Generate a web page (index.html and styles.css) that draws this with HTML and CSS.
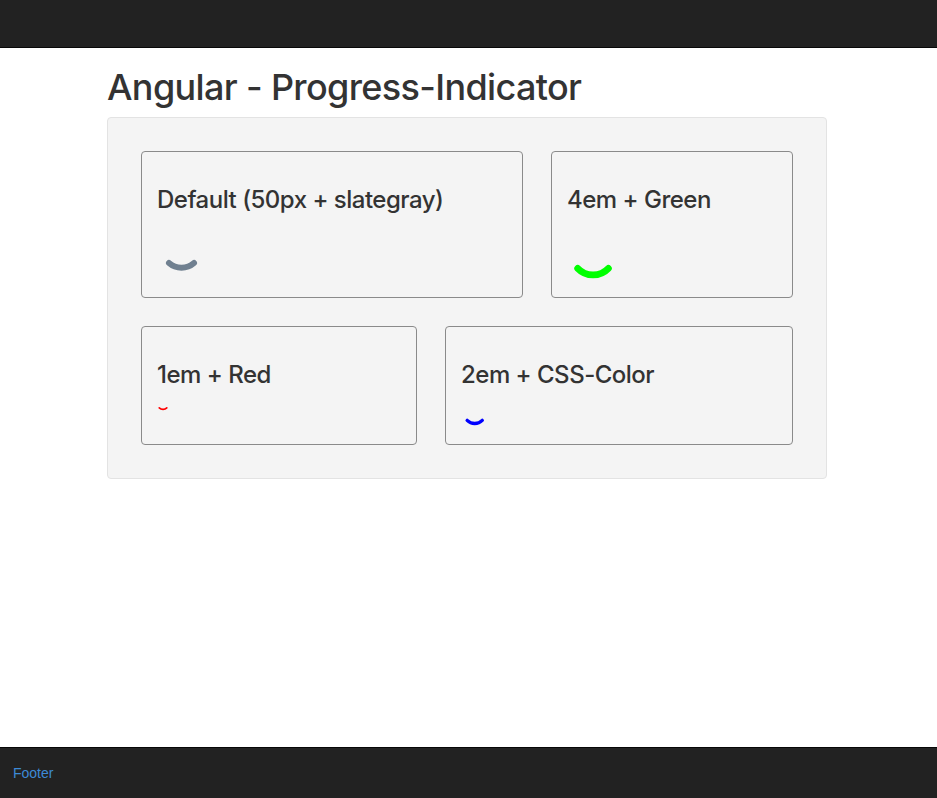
FILE: index.html
```html
<!DOCTYPE html>
<html lang="en">
<head>
<meta charset="utf-8">
<title>Angular - Progress-Indicator</title>
<link rel="stylesheet" href="styles.css">
</head>
<body>
<header class="navbar"></header>
<main class="main">
  <div class="container">
    <h1 class="page-title">Angular - Progress-Indicator</h1>
    <div class="well">
      <div class="row">
        <section class="card card-default">
          <h3 class="card-title">Default (50px + slategray)</h3>
          <div class="spinner spinner-50 slategray">
            <svg viewBox="0 0 100 100"><path d="M24 80 A38 38 0 0 0 74 80"/></svg>
          </div>
        </section>
        <section class="card card-green">
          <h3 class="card-title">4em + Green</h3>
          <div class="spinner spinner-4em green">
            <svg viewBox="0 0 100 100"><path d="M19 81 A38 38 0 0 0 74 81"/></svg>
          </div>
        </section>
      </div>
      <div class="row">
        <section class="card card-red">
          <h3 class="card-title">1em + Red</h3>
          <div class="spinner spinner-1em red">
            <svg viewBox="0 0 100 100"><path d="M16 70 A38 38 0 0 0 70 70"/></svg>
          </div>
        </section>
        <section class="card card-blue">
          <h3 class="card-title">2em + CSS-Color</h3>
          <div class="spinner spinner-2em blue">
            <svg viewBox="0 0 100 100"><path d="M22 80 A38 38 0 0 0 76 80"/></svg>
          </div>
        </section>
      </div>
    </div>
  </div>
</main>
<footer class="footer">
  <a class="footer-link" href="#">Footer</a>
</footer>
</body>
</html>
```
FILE: styles.css
```css
html, body {
  margin: 0;
  padding: 0;
  height: 100%;
}
body {
  display: flex;
  flex-direction: column;
  min-height: 100vh;
  font-family: "Liberation Sans", Arial, Helvetica, sans-serif;
  font-size: 14px;
  line-height: 1.42857;
  color: #333;
  background: #fff;
}
.navbar {
  flex: 0 0 auto;
  height: 47px;
  background: #222;
  border-bottom: 1px solid #080808;
}
.main {
  flex: 1 1 auto;
}
.container {
  width: 720px;
  margin-left: 107px;
}
.page-title {
  margin: 20px 0 9px;
  font-family: Inter, "Liberation Sans", Arial, sans-serif;
  font-size: 36px;
  line-height: 1.1;
  font-weight: 500;
  letter-spacing: -0.65px;
  color: #333;
}
.well {
  background: #f4f4f4;
  border: 1px solid #e3e3e3;
  border-radius: 4px;
  padding: 19px;
}
.row {
  display: flex;
  gap: 28px;
  margin: 14px;
}
.row + .row {
  margin-top: 28px;
}
.card {
  box-sizing: border-box;
  border: 1px solid #8a8a8a;
  border-radius: 4px;
  padding: 15px 15px 18px;
}
.card-default { width: 382px; }
.card-green { width: 242px; }
.card-red { width: 276px; }
.card-blue { width: 348px; }
.card-title {
  margin: 20px 0 10px;
  font-family: Inter, "Liberation Sans", Arial, sans-serif;
  font-size: 24px;
  line-height: 1.1;
  font-weight: 500;
  letter-spacing: -0.5px;
  color: #333;
}
.spinner svg {
  display: block;
  width: 100%;
  height: 100%;
}
.spinner path {
  fill: none;
  stroke: currentColor;
  stroke-width: 12;
  stroke-linecap: round;
}
.spinner-50 { width: 50px; height: 50px; }
.spinner-4em { width: 4em; height: 4em; }
.spinner-1em { width: 1em; height: 1em; }
.spinner-2em { width: 2em; height: 2em; }
.slategray { color: slategray; }
.green { color: #00ff00; }
.red { color: #ff0000; }
.blue { color: #0000ff; }
.footer {
  flex: 0 0 auto;
  background: #222;
  border-top: 1px solid #080808;
  padding: 15px 13px;
  line-height: 20px;
}
.footer-link {
  color: #3d8ad6;
  text-decoration: none;
  font-size: 14px;
}
```
